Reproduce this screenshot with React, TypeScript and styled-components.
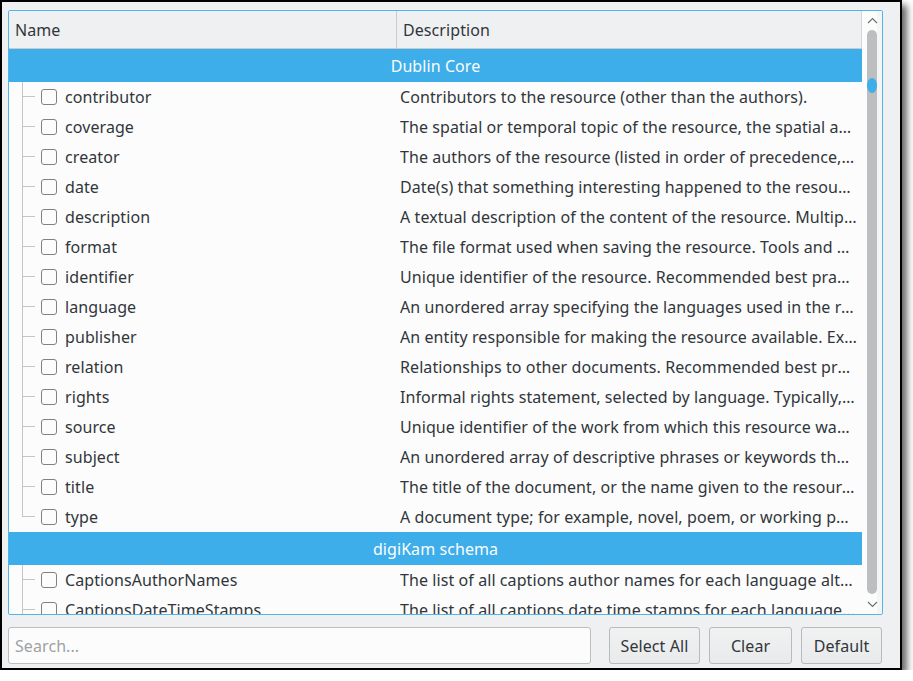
import React from "react";
import styled, { createGlobalStyle } from "styled-components";

const GlobalStyle = createGlobalStyle`
  html, body { margin: 0; padding: 0; background: #ffffff; }
  body { font-family: "Noto Sans", "DejaVu Sans", sans-serif; }
  * { box-sizing: border-box; }
`;

const Window = styled.div`
  width: 902px;
  height: 670px;
  border: 2px solid #000;
  background: #eff0f1;
  box-shadow: 5px 5px 7px rgba(0, 0, 0, 0.6);
  padding: 8px 17px 4px 6px;
  display: flex;
  flex-direction: column;
  gap: 12px;
  font-family: "Noto Sans", "DejaVu Sans", sans-serif;
  font-size: 16px;
  letter-spacing: 0.08px;
  color: #31363b;
`;

const TreeFrame = styled.div`
  height: 605px;
  border: 1px solid #52b5e8;
  border-radius: 2px;
  background: #fcfcfc;
  display: flex;
  overflow: hidden;
`;

const TableArea = styled.div`
  width: 853px;
  display: flex;
  flex-direction: column;
  overflow: hidden;
`;

const Header = styled.div`
  height: 38px;
  flex: none;
  display: flex;
  background: #eff0f1;
  border-bottom: 1px solid #c9cacb;
  border-right: 1px solid #d6d7d8;
`;

const HeaderCell = styled.div<{ $w?: number }>`
  ${(p) => (p.$w ? `width: ${p.$w}px;` : "flex: 1;")}
  display: flex;
  align-items: center;
  padding-left: 6px;
  ${(p) => (p.$w ? "border-right: 1px solid #c9cacb;" : "")}
`;

const Body = styled.div`
  flex: 1;
  overflow: hidden;
`;

const GroupRow = styled.div`
  height: 33px;
  background: #3daee9;
  color: #fcfcfc;
  display: flex;
  align-items: center;
  justify-content: center;
  padding-top: 1px;
`;

const Row = styled.div`
  height: 30px;
  display: flex;
  align-items: stretch;
`;

const NameCell = styled.div`
  width: 388px;
  flex: none;
  display: flex;
  align-items: center;
  padding-left: 13px;
  white-space: nowrap;
`;

const Guide = styled.div`
  width: 19px;
  height: 30px;
  display: flex;
  flex-direction: column;
  flex: none;
`;

const GuideTop = styled.div`
  height: 15px;
  width: 13px;
  border-left: 1px solid #c4c5c6;
  border-bottom: 1px solid #c4c5c6;
`;

const GuideBottom = styled.div<{ $last: boolean }>`
  height: 15px;
  border-left: 1px solid ${(p) => (p.$last ? "transparent" : "#c4c5c6")};
`;

const Check = styled.span`
  width: 16px;
  height: 16px;
  border: 1px solid #7f8183;
  border-radius: 3px;
  background: #fcfcfc;
  margin-right: 8px;
  flex: none;
`;

const DescCell = styled.div`
  flex: 1;
  min-width: 0;
  padding: 0 5px 0 3px;
  display: flex;
  align-items: center;
`;

const DescText = styled.span`
  white-space: nowrap;
  overflow: hidden;
  text-overflow: ellipsis;
`;

const ScrollBar = styled.div`
  width: 20px;
  flex: none;
  display: flex;
  flex-direction: column;
  align-items: center;
  background: linear-gradient(to right, #fcfcfc 0 15px, #f4f5f5 15px);
`;

const ArrowZone = styled.div<{ $h: number }>`
  height: ${(p) => p.$h}px;
  flex: none;
  width: 100%;
  display: flex;
  align-items: center;
  justify-content: center;
`;

const Track = styled.div`
  flex: 1;
  width: 10px;
  border-radius: 5px;
  background: #bdbebf;
  display: flex;
  flex-direction: column;
  padding-top: 48px;
`;

const Handle = styled.div`
  width: 10px;
  height: 15px;
  border-radius: 50%;
  background: #3daee9;
`;

const BottomBar = styled.div`
  height: 37px;
  flex: none;
  display: flex;
  align-items: stretch;
`;

const SearchBox = styled.input`
  width: 583px;
  margin-right: 18px;
  border: 1px solid #bcbebf;
  border-radius: 3px;
  background: #fcfcfc;
  font-family: "Noto Sans", "DejaVu Sans", sans-serif;
  font-size: 16px;
  letter-spacing: 0.08px;
  color: #31363b;
  padding: 0 6px;
  outline: none;
  &::placeholder { color: #a0a2a4; }
`;

const Button = styled.button<{ $w: number; $first?: boolean }>`
  width: ${(p) => p.$w}px;
  margin-left: ${(p) => (p.$first ? 0 : 9)}px;
  border: 1px solid #b9babb;
  border-radius: 3px;
  background: linear-gradient(#f0f1f1, #e9eaeb);
  font-family: "Noto Sans", "DejaVu Sans", sans-serif;
  font-size: 16px;
  letter-spacing: 0.08px;
  color: #31363b;
  padding: 0;
  white-space: nowrap;
`;

const Chevron = ({ up }: { up: boolean }) => (
  <svg width="11" height="7" viewBox="0 0 11 7">
    <path
      d={up ? "M1 6 L5.5 1.5 L10 6" : "M1 1 L5.5 5.5 L10 1"}
      fill="none"
      stroke="#6e7173"
      strokeWidth="1.2"
    />
  </svg>
);

type Item = [string, string];

const dublin: Item[] = [
  ["contributor", "Contributors to the resource (other than the authors)."],
  ["coverage", "The spatial or temporal topic of the resource, the spatial applicability, or jurisdiction under which the resource is relevant."],
  ["creator", "The authors of the resource (listed in order of precedence, if significant)."],
  ["date", "Date(s) that something interesting happened to the resource."],
  ["description", "A textual description of the content of the resource. Multiple values may be present for different languages."],
  ["format", "The file format used when saving the resource. Tools and applications should set this property to the save format of the data."],
  ["identifier", "Unique identifier of the resource. Recommended best practice is to identify the resource by means of a string."],
  ["language", "An unordered array specifying the languages used in the resource."],
  ["publisher", "An entity responsible for making the resource available. Examples of a Publisher include a person."],
  ["relation", "Relationships to other documents. Recommended best practice is to identify the related resource."],
  ["rights", "Informal rights statement, selected by language. Typically, a rights element will contain a rights management statement."],
  ["source", "Unique identifier of the work from which this resource was derived."],
  ["subject", "An unordered array of descriptive phrases or keywords that specify the topic of the content of the resource."],
  ["title", "The title of the document, or the name given to the resource."],
  ["type", "A document type; for example, novel, poem, or working paper."],
];

const digikam: Item[] = [
  ["CaptionsAuthorNames", "The list of all captions author names for each language alternative captions set in standard XMP tags."],
  ["CaptionsDateTimeStamps", "The list of all captions date time stamps for each language alternative captions set in standard XMP tags."],
  ["ColorLabel", "The color label assigned to this item."],
];

const Group = ({ title, items, lastIndex }: { title: string; items: Item[]; lastIndex: number }) => (
  <>
    <GroupRow>{title}</GroupRow>
    {items.map(([name, desc], i) => (
      <Row key={name}>
        <NameCell>
          <Guide>
            <GuideTop />
            <GuideBottom $last={i === lastIndex} />
          </Guide>
          <Check />
          {name}
        </NameCell>
        <DescCell>
          <DescText>{desc}</DescText>
        </DescCell>
      </Row>
    ))}
  </>
);

export default function App() {
  return (
    <>
      <GlobalStyle />
      <Window>
        <TreeFrame>
          <TableArea>
            <Header>
              <HeaderCell $w={388}>Name</HeaderCell>
              <HeaderCell>Description</HeaderCell>
            </Header>
            <Body>
              <Group title="Dublin Core" items={dublin} lastIndex={dublin.length - 1} />
              <Group title="digiKam schema" items={digikam} lastIndex={-1} />
            </Body>
          </TableArea>
          <ScrollBar>
            <ArrowZone $h={19}>
              <Chevron up />
            </ArrowZone>
            <Track>
              <Handle />
            </Track>
            <ArrowZone $h={20}>
              <Chevron up={false} />
            </ArrowZone>
          </ScrollBar>
        </TreeFrame>
        <BottomBar>
          <SearchBox placeholder="Search..." />
          <Button $w={91} $first>Select All</Button>
          <Button $w={83}>Clear</Button>
          <Button $w={81}>Default</Button>
        </BottomBar>
      </Window>
    </>
  );
}
